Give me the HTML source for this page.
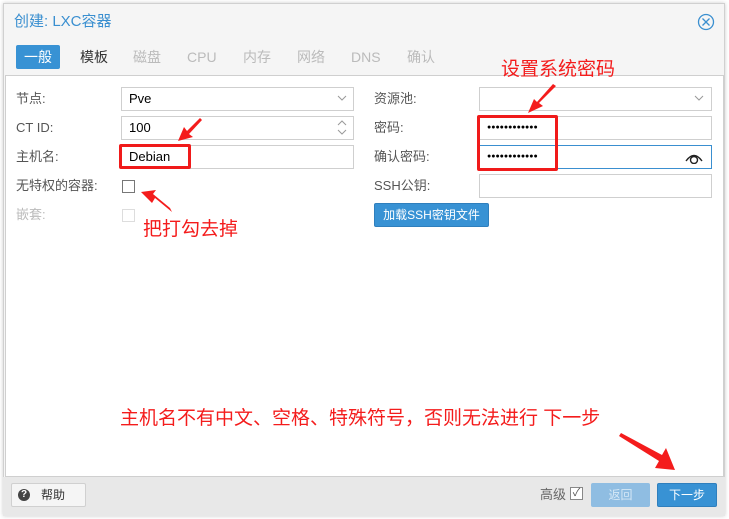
<!DOCTYPE html>
<html><head><meta charset="utf-8"><style>
*{box-sizing:border-box;margin:0;padding:0}
body{width:729px;height:519px;background:#fff;font-family:"Liberation Sans","Noto Sans CJK SC",sans-serif;font-size:13px;color:#333;position:relative;overflow:hidden}
.win{position:absolute;left:3px;top:3px;width:722px;height:513px;background:#f5f5f5;border:1px solid #d0d0d0;box-shadow:0 0 4px rgba(0,0,0,.2)}
.a{position:absolute;white-space:nowrap;line-height:16px}
.inp{position:absolute;height:24px;border:1px solid #cfcfcf;background:#fff;padding-left:7px;line-height:22px;font-size:13px;color:#000}
.lbl{position:absolute;color:#555;font-size:13px;line-height:16px;white-space:nowrap}
.red{position:absolute;border:3px solid #f01a1a;border-radius:2px}
.ann{position:absolute;color:#f41c1c;font-size:19px;white-space:nowrap;line-height:22px}
.tab{position:absolute;font-size:14px;line-height:16px;top:49px}
</style></head><body>
<div class="win"></div>
<div class="a" style="left:3px;top:477px;width:722px;height:39px;background:#e8e8e8"></div>
<div class="a" style="left:14px;top:13px;color:#3a8fd0;font-size:15px;line-height:18px">创建: LXC容器</div>
<svg class="a" style="left:697px;top:13px" width="18" height="18"><circle cx="9" cy="9" r="7.5" fill="none" stroke="#3a8fd0" stroke-width="1.3"/><path d="M5.5 5.5L12.5 12.5M12.5 5.5L5.5 12.5" stroke="#3a8fd0" stroke-width="1.3"/></svg>
<div class="a" style="left:16px;top:45px;width:44px;height:24px;background:#3892d4;border-radius:2px;color:#fff;text-align:center;line-height:24px;font-size:14px">一般</div>
<div class="tab" style="left:80px;color:#333">模板</div>
<div class="tab" style="left:133px;color:#bbb">磁盘</div>
<div class="tab" style="left:187px;color:#bbb">CPU</div>
<div class="tab" style="left:243px;color:#bbb">内存</div>
<div class="tab" style="left:297px;color:#bbb">网络</div>
<div class="tab" style="left:351px;color:#bbb">DNS</div>
<div class="tab" style="left:407px;color:#bbb">确认</div>
<div class="a" style="left:5px;top:75px;width:719px;height:402px;background:#fff;border:1px solid #cfcfcf"></div>

<div class="lbl" style="left:16px;top:91px">节点:</div>
<div class="inp" style="left:121px;top:87px;width:233px">Pve</div>
<svg class="a" style="left:337px;top:95px" width="10" height="7"><path d="M1 1L5 5L9 1" fill="none" stroke="#999"/></svg>
<div class="lbl" style="left:16px;top:120px">CT ID:</div>
<div class="inp" style="left:121px;top:116px;width:233px">100</div>
<svg class="a" style="left:337px;top:120px" width="10" height="16"><path d="M1 5L5 1L9 5M1 10L5 14L9 10" fill="none" stroke="#999"/></svg>
<div class="lbl" style="left:16px;top:149px">主机名:</div>
<div class="inp" style="left:121px;top:145px;width:233px">Debian</div>
<div class="lbl" style="left:16px;top:178px">无特权的容器:</div>
<div class="a" style="left:122px;top:180px;width:13px;height:13px;border:1px solid #777;background:#fff"></div>
<div class="lbl" style="left:16px;top:207px;color:#bbb">嵌套:</div>
<div class="a" style="left:122px;top:209px;width:13px;height:13px;border:1px solid #ddd;background:#fff"></div>

<div class="lbl" style="left:374px;top:91px">资源池:</div>
<div class="inp" style="left:479px;top:87px;width:233px"></div>
<svg class="a" style="left:694px;top:95px" width="10" height="7"><path d="M1 1L5 5L9 1" fill="none" stroke="#999"/></svg>
<div class="lbl" style="left:374px;top:120px">密码:</div>
<div class="inp" style="left:479px;top:116px;width:233px;font-size:7px;letter-spacing:0px">●●●●●●●●●●●●</div>
<div class="lbl" style="left:374px;top:149px">确认密码:</div>
<div class="inp" style="left:479px;top:145px;width:233px;border-color:#3a8fd0;font-size:7px;letter-spacing:0px">●●●●●●●●●●●●</div>
<svg class="a" style="left:684px;top:150px" width="20" height="14"><path d="M2 11Q10 0 18 11" fill="none" stroke="#222" stroke-width="1.4"/><circle cx="10" cy="10" r="3.5" fill="none" stroke="#222" stroke-width="1.4"/></svg>
<div class="lbl" style="left:374px;top:178px">SSH公钥:</div>
<div class="inp" style="left:479px;top:174px;width:233px"></div>
<div class="a" style="left:374px;top:203px;width:115px;height:24px;background:#3892d4;border:1px solid #2f7fbd;border-radius:2px;color:#fff;font-size:12px;text-align:center;line-height:22px">加载SSH密钥文件</div>

<div class="red" style="left:119px;top:144px;width:72px;height:25px"></div>
<div class="red" style="left:477px;top:115px;width:81px;height:56px"></div>

<div class="ann" style="left:501px;top:59px">设置系统密码</div>
<div class="ann" style="left:143px;top:219px">把打勾去掉</div>
<div class="ann" style="left:120px;top:408px">主机名不有中文、空格、特殊符号，否则无法进行 下一步</div>

<svg class="a" style="left:0;top:0" width="729" height="519">
<polygon fill="#f41c1c" points="202,120 189,134 193,137 178,141 184,127 187,131 200,118"/>
<polygon fill="#f41c1c" points="172,212 155,198 152,203 141,192 156,190 153,194 170,208"/>
<polygon fill="#f41c1c" points="556,86 539,103 543,106 528,113 534,99 537,102 553,84"/>
<polygon fill="#f41c1c" points="621,433 662,455 666,448 675,470 655,468 659,461 619,436"/>
</svg>

<div class="a" style="left:11px;top:483px;width:75px;height:24px;border:1px solid #d0d0d0;border-radius:2px;background:#f5f5f5;line-height:22px;padding-left:29px;font-size:12px;color:#333">帮助</div>
<div class="a" style="left:18px;top:489px;width:12px;height:12px;border-radius:50%;background:#444;color:#fff;font-size:10px;line-height:12px;text-align:center;font-weight:bold">?</div>
<div class="a" style="left:540px;top:487px;color:#666;font-size:13px">高级</div>
<div class="a" style="left:570px;top:487px;width:13px;height:13px;border:1px solid #888;background:#fff;font-size:11px;line-height:11px;text-align:center;color:#555">✓</div>
<div class="a" style="left:591px;top:483px;width:59px;height:24px;background:#8fbde2;border-radius:2px;color:#d6e8f6;text-align:center;line-height:24px;font-size:12px">返回</div>
<div class="a" style="left:657px;top:483px;width:60px;height:24px;background:#3892d4;border:1px solid #2f7fbd;border-radius:2px;color:#fff;text-align:center;line-height:22px;font-size:12px">下一步</div>
</body></html>
